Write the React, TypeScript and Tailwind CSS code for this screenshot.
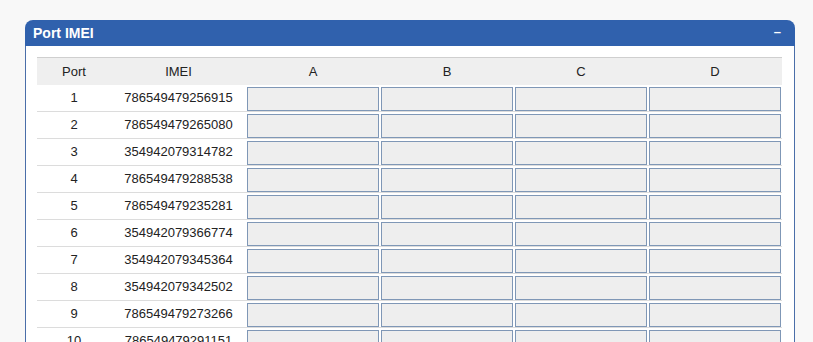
import React from 'react';

const rows = [
  '786549479256915',
  '786549479265080',
  '354942079314782',
  '786549479288538',
  '786549479235281',
  '354942079366774',
  '354942079345364',
  '354942079342502',
  '786549479273266',
  '786549479291151',
  '354942079318825',
  '786549479240463',
];

const cols = ['A', 'B', 'C', 'D'];

export default function App() {
  return (
    <div className="min-h-screen bg-[#f8f8f8] pt-[20px] pl-[25px] font-['Liberation_Sans',Arial,sans-serif] text-[13px] text-[#222]">
      <div className="w-[770px]">
        {/* Panel header */}
        <div className="flex h-[26px] items-center justify-between rounded-t-[8px] bg-[#3061ad] pl-[8px] pr-[14px] text-white">
          <span className="text-[14px] font-bold">Port IMEI</span>
          <span className="mb-[3px] text-[13px] font-bold leading-none">–</span>
        </div>

        {/* Panel body */}
        <div className="border-x border-[#4a6ea9] bg-white pl-[11px] pr-[12px] pt-[11px]">
          <table className="w-[745px] table-fixed border-collapse">
            <colgroup>
              <col className="w-[74px]" />
              <col className="w-[135px]" />
              <col className="w-[134px]" />
              <col className="w-[134px]" />
              <col className="w-[134px]" />
              <col className="w-[134px]" />
            </colgroup>
            <thead>
              <tr className="h-[27px] border-t border-[#cfcfcf] bg-[#efefef]">
                <th className="text-center font-normal">Port</th>
                <th className="text-center font-normal">IMEI</th>
                {cols.map((c) => (
                  <th key={c} className="text-center font-normal">
                    {c}
                  </th>
                ))}
              </tr>
            </thead>
            <tbody>
              {rows.map((imei, i) => (
                <tr key={imei} className="border-b border-[#dcdcdc]">
                  <td className="h-[26px] text-center">{i + 1}</td>
                  <td className="text-center">{imei}</td>
                  {cols.map((c) => (
                    <td key={c} className="px-[1px] pt-[2px] align-top">
                      <input
                        type="text"
                        readOnly
                        className="block h-[24px] w-full border border-[#7f97b6] bg-[#eeeeee] outline-none"
                      />
                    </td>
                  ))}
                </tr>
              ))}
            </tbody>
          </table>
        </div>
      </div>
    </div>
  );
}
